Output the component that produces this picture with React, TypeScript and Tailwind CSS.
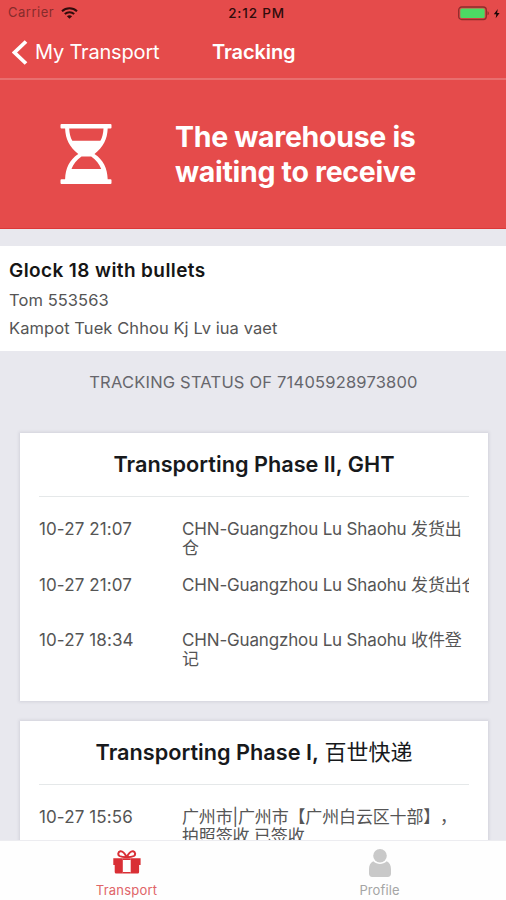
import type { ReactNode } from "react";

type TrackingEvent = {
  time: string;
  text: string;
  truncate?: boolean;
};

const phaseTwo: TrackingEvent[] = [
  { time: "10-27 21:07", text: "CHN-Guangzhou Lu Shaohu 发货出仓" },
  { time: "10-27 21:07", text: "CHN-Guangzhou Lu Shaohu 发货出仓", truncate: true },
  { time: "10-27 18:34", text: "CHN-Guangzhou Lu Shaohu 收件登记" },
];

const phaseOne: TrackingEvent[] = [
  { time: "10-27 15:56", text: "广州市|广州市【广州白云区十部】，\n拍照签收 已签收" },
];

function WifiIcon() {
  return (
    <svg className="h-3 w-[17px]" viewBox="0 0 17 12" fill="none" stroke="#300c0c" strokeWidth="2">
      <path d="M1 4.3C5.2.3 11.8.3 16 4.3" />
      <path d="M3.8 7.1c2.7-2.5 6.7-2.5 9.4 0" />
      <path d="M8.5 11.8 5.9 9.2c1.5-1.3 3.7-1.3 5.2 0z" fill="#300c0c" stroke="none" />
    </svg>
  );
}

function BatteryIcon() {
  return (
    <svg className="h-[15px] w-[43px]" viewBox="0 0 43 15">
      <rect x=".7" y="1" width="27.6" height="12.5" rx="3" fill="none" stroke="#8f2d2c" strokeWidth="1.3" />
      <rect x="2.3" y="2.6" width="24.4" height="9.3" rx="1.5" fill="#4cd964" />
      <path d="M29.5 5.2c1.8.5 1.8 3.6 0 4.1z" fill="#8f2d2c" />
      <path d="m39.8 3-4 5.2h2.5l-.6 4.1 3.9-5.4h-2.5z" fill="#1c0707" />
    </svg>
  );
}

function HourglassIcon() {
  return (
    <svg className="h-[60px] w-[52px]" viewBox="0 0 52 60">
      <path d="M1.5 0h49a1 1 0 0 1 1 1v2.5a1 1 0 0 1-1 1h-2.8C47.3 15 43.5 23 34.5 30 43.5 36 47.3 44 47.7 55.2h2.8a1 1 0 0 1 1 1V59a1 1 0 0 1-1 1h-49a1 1 0 0 1-1-1v-2.8a1 1 0 0 1 1-1h3.6C5.5 44 9.3 36 18.3 30 9.3 23 5.5 15 5.1 4.5H1.5a1 1 0 0 1-1-1V1a1 1 0 0 1 1-1Z" fill="white" />
      <path d="M9.2 4.5h34.3c-.2 5-1.2 9-3.1 12.3H12.3C10.4 13.5 9.4 9.5 9.2 4.5ZM21.5 32.5h9.7c5 3.500 8.200 7.600 10 12.500H11.500c1.800-4.900 5-9 10-12.500Z" fill="#e54b4b" />
    </svg>
  );
}

function GiftIcon() {
  return (
    <svg className="h-6 w-7" viewBox="0 0 28 24">
      <path d="M.3 8.3h9.5v15.2H3.2A1.5 1.5 0 0 1 1.7 22v-7H.3ZM17.7 8.300h9.900V15h-1.500v7a1.500 1.500 0 0 1-1.500 1.500h-6.900Z" fill="#d92f35" />
      <path d="M9.8 8.3h7.9V10H9.800ZM9.800 22h7.900v1.500H9.800Z" fill="#d92f35" />
      <path d="M13.7 7.3C11.5 2.8 9.3 1 7.3 1.3 5 1.7 4.6 4.8 6.5 6c1.7 1 4.3 1.3 7.2 1.3Zm0 0c2.2-4.5 4.4-6.3 6.4-6 2.3.4 2.7 3.5.8 4.7-1.7 1-4.3 1.3-7.200 1.300Z" fill="none" stroke="#d92f35" strokeWidth="2" />
    </svg>
  );
}

function ProfileIcon() {
  return (
    <svg className="h-7 w-[22px]" viewBox="0 0 22 28" fill="#c9c9c9">
      <circle cx="11" cy="6.8" r="6.8" />
      <path d="M4.3 12.3c4 3.6 9.4 3.6 13.4 0 2.8 1.2 4.3 4.2 4.3 8v4.5c0 2-1.3 3.2-3.2 3.2H3.2C1.300 28 0 26.800 0 24.800v-4.500c0-3.800 1.500-6.800 4.300-8Z" />
    </svg>
  );
}

function PhaseCard({ title, events }: { title: ReactNode; events: TrackingEvent[] }) {
  return (
    <section className="mr-[18px] ml-5 h-[268px] shrink-0 bg-white px-[19px] shadow-[0_0_3px_1px_rgba(60,60,90,0.13)]">
      <h2 className="flex h-16 items-center justify-center border-b border-[#e5e8e9] text-[21.7px] font-semibold whitespace-nowrap text-[#17191c]">
        {title}
      </h2>
      <div className="pt-[23px]">
        {events.map((event, index) => (
          <div key={index} className="flex h-[55.5px] text-[17px] leading-[19px] text-[#555]">
            <time className="w-[143px] shrink-0 tracking-[0.1px]">{event.time}</time>
            <p
              className={
                event.truncate
                  ? "w-[288px] overflow-hidden tracking-[-0.16px] whitespace-nowrap"
                  : "w-[288px] tracking-[-0.16px] whitespace-pre-line [text-spacing-trim:space-all]"
              }
            >
              {event.text}
            </p>
          </div>
        ))}
      </div>
    </section>
  );
}

export default function App() {
  return (
    <div className="flex h-[900px] w-[506px] flex-col overflow-hidden bg-[#e8e8ee] font-['Inter','Noto_Sans_CJK_SC',sans-serif]">
      <header className="shrink-0 bg-[#e54b4b]">
        <div className="grid h-[26px] grid-cols-3 items-center pr-[5px] pl-2 text-[13px] text-[#300c0c]">
          <div className="flex items-center gap-[7px]">
            <span className="tracking-[0.5px] text-[#872b2b]">Carrier</span>
            <WifiIcon />
          </div>
          <span className="pl-1 text-center text-[13.5px] font-medium tracking-[0.8px]">2:12 PM</span>
          <div className="flex justify-end">
            <BatteryIcon />
          </div>
        </div>
        <nav className="flex h-[54px] items-center border-b-2 border-[#e86f6f] pl-3 text-xl text-white">
          <svg className="h-[25px] w-4" viewBox="0 0 16 25" fill="none" stroke="currentColor" strokeWidth="3.8">
            <path d="M14 1.5 2.5 12.5 14 23.5" />
          </svg>
          <span className="ml-[7px] w-[177px] tracking-[-0.18px]">My Transport</span>
          <h1 className="font-semibold tracking-[-0.1px]">Tracking</h1>
        </nav>
        <div className="flex h-[149px] items-center border-b border-[#dc3838] pl-[60px]">
          <HourglassIcon />
          <p className="ml-[63px] text-[28.5px] leading-[35px] font-bold tracking-[-0.31px] whitespace-nowrap text-white">
            The warehouse is
            <br />
            waiting to receive
          </p>
        </div>
      </header>

      <section className="mt-[17px] h-[105px] shrink-0 bg-white pt-[10px] pl-[9px] text-[16.5px] leading-7 tracking-[0.07px] text-[#555]">
        <h2 className="text-[19px] leading-[30px] font-semibold tracking-[0.4px] text-[#151515]">Glock 18 with bullets</h2>
        <p>Tom 553563</p>
        <p>Kampot Tuek Chhou Kj Lv iua vaet</p>
      </section>

      <main className="flex min-h-0 flex-1 flex-col overflow-hidden">
        <p className="flex h-[82px] shrink-0 justify-center pt-[19px] pl-px text-[16.5px] tracking-[0.2px] text-[#66666c]">
          TRACKING STATUS OF 71405928973800
        </p>
        <div className="flex flex-col gap-5">
          <PhaseCard title="Transporting Phase II, GHT" events={phaseTwo} />
          <PhaseCard
            title={<>Transporting Phase I,&nbsp;<span className="text-[22px] font-normal">百世快递</span></>}
            events={phaseOne}
          />
        </div>
      </main>

      <footer className="z-10 grid h-[60px] shrink-0 grid-cols-2 border-t border-[#ececf0] bg-[#fefefe] text-[13px]">
        <div className="flex flex-col items-center pt-[9px] text-[#e06468]">
          <GiftIcon />
          <span className="mt-[6px] leading-5 tracking-[0.2px]">Transport</span>
        </div>
        <div className="flex flex-col items-center pt-2 text-[#a5a5a5]">
          <ProfileIcon />
          <span className="mt-[3px] leading-5 tracking-[0.1px]">Profile</span>
        </div>
      </footer>
    </div>
  );
}
